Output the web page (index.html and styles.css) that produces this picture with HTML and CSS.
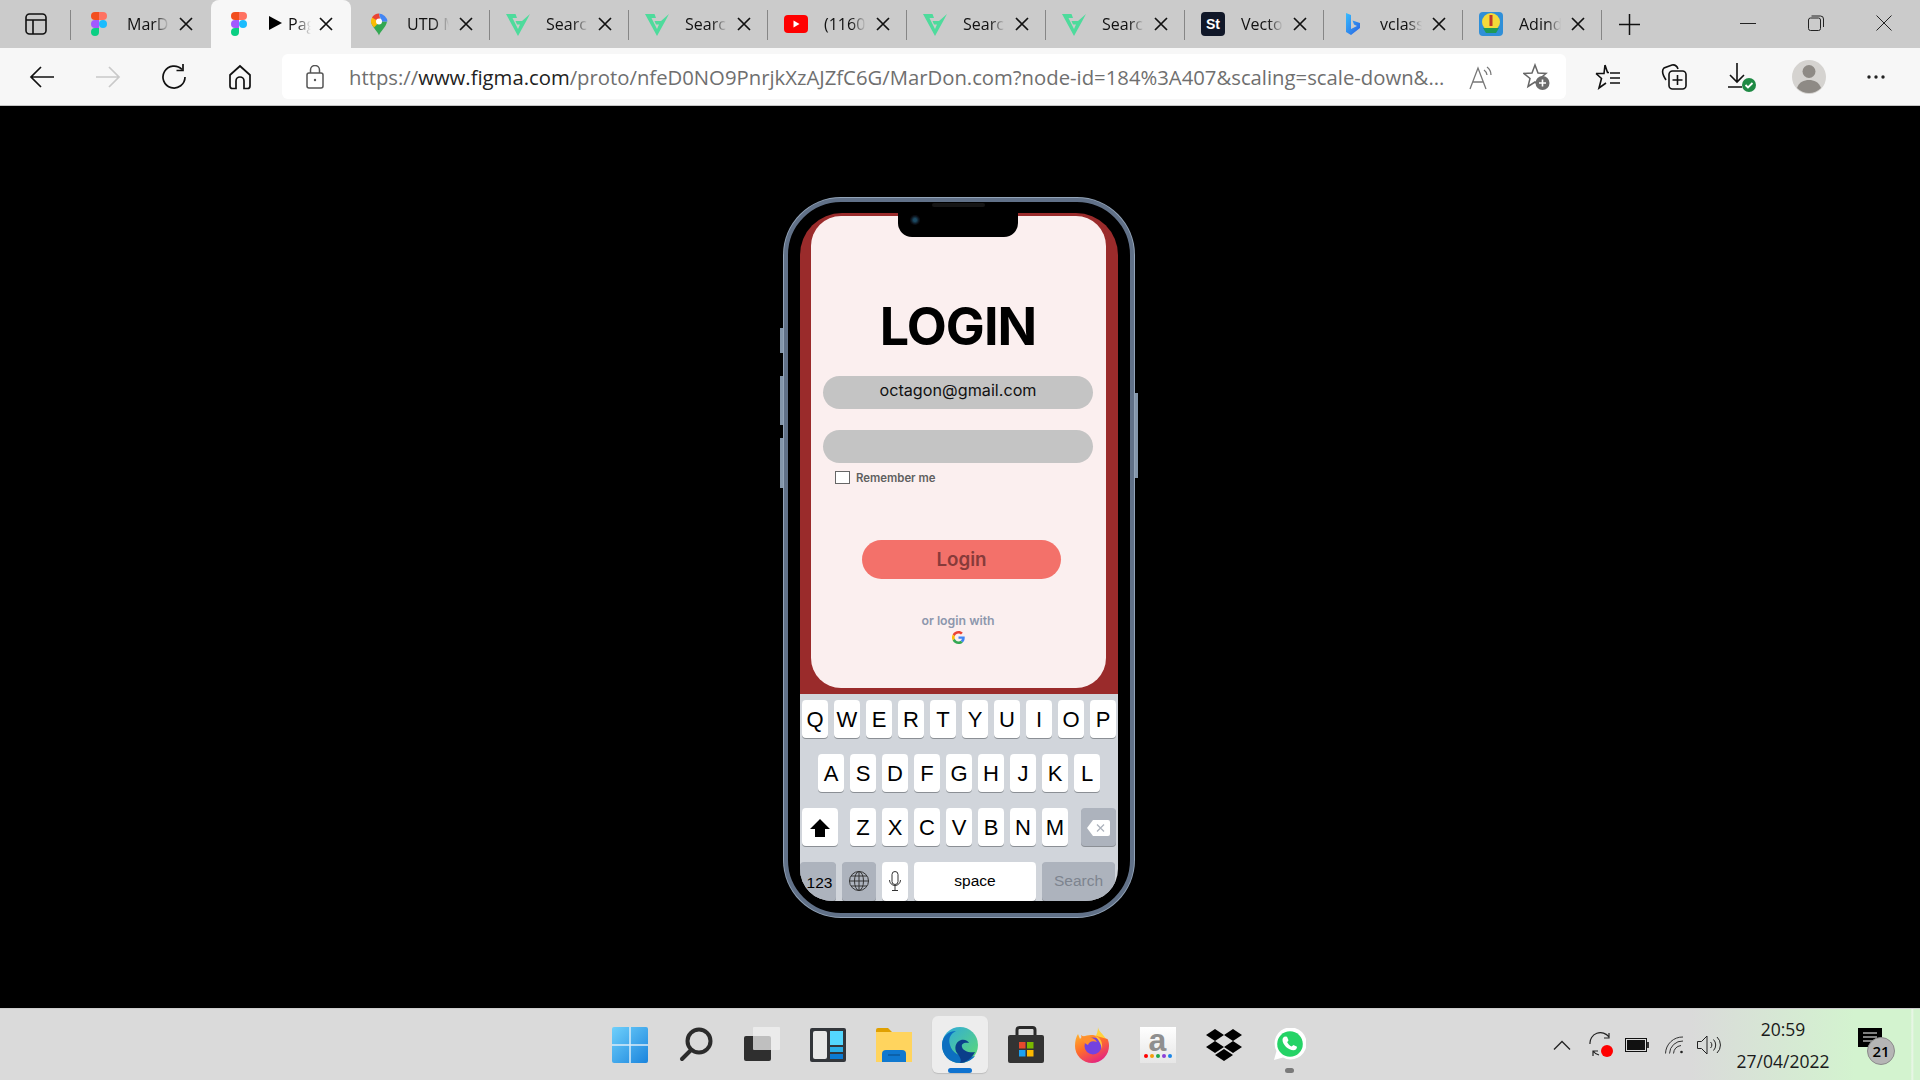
FILE: index.html
```html
<!DOCTYPE html>
<html lang="en">
<head>
    <meta charset="UTF-8">
    <meta name="viewport" content="width=device-width, initial-scale=1.0">
    <title>MarDon.com login prototype</title>
    <link rel="stylesheet" href="styles.css">
</head>
<body>

    <svg class="defs" width="0" height="0">
        <defs>
            <symbol id="figma" viewBox="0 0 16 24">
                <path fill="#f24e1e" d="M4 0h4v8H4a4 4 0 0 1 0-8z"/>
                <path fill="#ff7262" d="M8 0h4a4 4 0 0 1 0 8H8z"/>
                <path fill="#a259ff" d="M4 8h4v8H4a4 4 0 0 1 0-8z"/>
                <circle fill="#1abcfe" cx="12" cy="12" r="4"/>
                <path fill="#0acf83" d="M4 16h4v4a4 4 0 1 1-4-4z"/>
            </symbol>
            <symbol id="fenix" viewBox="0 0 24 24">
                <path fill="#4edb9c" d="M0 2h9.500l1.500 4H6.500l5.500 11 2-4.500h-3l-1.500-3.500h6.500L24 2l-4 7.500L12 24z"/>
            </symbol>
            <symbol id="close" viewBox="0 0 14 14">
                <path d="M1 1l12 12M13 1L1 13" stroke="#111" stroke-width="1.700" fill="none"/>
            </symbol>
        </defs>
    </svg>

    <div class="tabstrip">
        <div class="sidebar-btn">
            <svg width="22" height="22" viewBox="0 0 22 22" fill="none" stroke="#111" stroke-width="1.600"><rect x="1" y="1" width="20" height="20" rx="3.500"/><path d="M1 7h20M8 7v14"/></svg>
        </div>
        <div class="tab tab-first"><svg class="fav fav-figma"><use href="#figma"/></svg><span class="tab-title">MarDon</span><svg class="tab-close"><use href="#close"/></svg></div>
        <div class="tab tab-first tab-active"><svg class="fav fav-figma"><use href="#figma"/></svg><span class="tab-title"><span class="play"></span>Page</span><svg class="tab-close"><use href="#close"/></svg></div>
        <div class="tab tab-sep">
            <svg class="fav" viewBox="0 1 24 23"><path fill="#34a853" d="M12 24c-1-4-7-8-8-14h16c-1 6-7 10-8 14z"/><path fill="#fbbc04" d="M4 10c0-1 0-3 2-5l6 6-5 5c-2-2-3-4-3-6z"/><path fill="#ea4335" d="M5 6a9 9 0 0 1 7-4l1 5-3 2z"/><path fill="#4285f4" d="M12 2a9 9 0 0 1 8.500 8h-6z"/><circle cx="12" cy="10" r="3" fill="#fff"/></svg>
            <span class="tab-title">UTD Map</span><svg class="tab-close"><use href="#close"/></svg>
        </div>
        <div class="tab tab-sep"><svg class="fav"><use href="#fenix"/></svg><span class="tab-title">Search</span><svg class="tab-close"><use href="#close"/></svg></div>
        <div class="tab tab-sep"><svg class="fav"><use href="#fenix"/></svg><span class="tab-title">Search</span><svg class="tab-close"><use href="#close"/></svg></div>
        <div class="tab tab-sep">
            <svg class="fav" viewBox="0 0 24 24"><rect y="3" width="24" height="18" rx="4" fill="#f00"/><path fill="#fff" d="M9.500 8.500v7l6-3.500z"/></svg>
            <span class="tab-title">(1160)</span><svg class="tab-close"><use href="#close"/></svg>
        </div>
        <div class="tab tab-sep"><svg class="fav"><use href="#fenix"/></svg><span class="tab-title">Search</span><svg class="tab-close"><use href="#close"/></svg></div>
        <div class="tab tab-sep"><svg class="fav"><use href="#fenix"/></svg><span class="tab-title">Search</span><svg class="tab-close"><use href="#close"/></svg></div>
        <div class="tab tab-sep">
            <span class="fav fav-stock">St</span>
            <span class="tab-title">Vector</span><svg class="tab-close"><use href="#close"/></svg>
        </div>
        <div class="tab tab-sep">
            <svg class="fav" viewBox="0 0 24 24"><defs><linearGradient id="bing" x1="0" y1="0" x2="1" y2="1"><stop offset="0" stop-color="#37bdff"/><stop offset="1" stop-color="#2a5fe0"/></linearGradient></defs><path fill="url(#bing)" d="M6 1l5 2v14l6-3-3-1.500-1.500-4L20 11v5l-9 7-5-3z"/></svg>
            <span class="tab-title">vclass</span><svg class="tab-close"><use href="#close"/></svg>
        </div>
        <div class="tab tab-sep">
            <svg class="fav" viewBox="0 0 24 24"><rect width="24" height="24" rx="4" fill="#2f8fd8"/><circle cx="12" cy="10" r="9" fill="#f3d93a"/><rect x="10.500" y="3" width="3" height="11" fill="#c0392b"/><path fill="#1f9a56" d="M4 16h16l-3 5H7z"/></svg>
            <span class="tab-title">Adinda</span><svg class="tab-close"><use href="#close"/></svg>
        </div>
        <div class="new-tab">
            <svg width="21" height="21" viewBox="0 0 21 21" stroke="#111" stroke-width="1.500"><path d="M10.500 0v21M0 10.500h21"/></svg>
        </div>
        <div class="window-controls">
            <svg width="16" height="16" viewBox="0 0 16 16" stroke="#222" stroke-width="1"><path d="M0 8.500h16"/></svg>
            <svg width="16" height="16" viewBox="0 0 16 16" fill="none" stroke="#222" stroke-width="1"><rect x=".5" y="3" width="12" height="12.500" rx="2"/><path d="M3.500 1h9a3 3 0 0 1 3 3v8"/></svg>
            <svg width="16" height="16" viewBox="0 0 16 16" stroke="#222" stroke-width="1"><path d="M.5.500l15 15M15.500.5l-15 15"/></svg>
        </div>
    </div>

    <div class="toolbar">
        <button class="nav-btn">
            <svg width="26" height="24" viewBox="0 0 26 24" fill="none" stroke="#111" stroke-width="1.700"><path d="M25 12H2M12 2L2 12l10 10"/></svg>
        </button>
        <button class="nav-btn">
            <svg width="26" height="24" viewBox="0 0 26 24" fill="none" stroke="#c9c9c9" stroke-width="1.700"><path d="M1 12h23M14 2l10 10-10 10"/></svg>
        </button>
        <button class="nav-btn">
            <svg width="26" height="26" viewBox="0 0 26 26" fill="none" stroke="#111" stroke-width="1.700"><path d="M21 5.500A11 11 0 1 0 24 13"/><path d="M22 0v6.500h-6.500"/></svg>
        </button>
        <button class="nav-btn">
            <svg width="24" height="26" viewBox="0 0 24 26" fill="none" stroke="#111" stroke-width="1.700"><path d="M2 11L12 2l10 9v11a2.500 2.500 0 0 1-2.500 2.500H16V17a4 4 0 0 0-8 0v7.500H4.500A2.500 2.500 0 0 1 2 22z"/></svg>
        </button>
        <div class="addressbar">
            <svg class="lock" width="18" height="24" viewBox="0 0 18 24" fill="none" stroke="#555" stroke-width="1.500"><rect x="1" y="8" width="16" height="15" rx="2"/><path d="M4.500 8V5a4.500 4.500 0 0 1 9 0v3"/><circle cx="9" cy="15" r="1.200" fill="#555" stroke="none"/></svg>
            <span class="url">https://<b>www.figma.com</b>/proto/nfeD0NO9PnrjkXzAJZfC6G/MarDon.com?node-id=184%3A407&amp;scaling=scale-down&amp;...</span>
            <svg class="read-aloud" width="26" height="26" viewBox="0 0 26 26" fill="none" stroke="#777" stroke-width="1.300"><path d="M1 25L9 4l8 21M4 18h10"/><path d="M15 6a7 7 0 0 1 3 5M18 3a10 10 0 0 1 4 8"/></svg>
            <svg class="fav-add" width="28" height="28" viewBox="0 0 28 28"><path fill="none" stroke="#666" stroke-width="1.500" d="M12 2l3 8 8 .5-6 5 2 8-7-4.500-7 4.500 2-8-6-5 8-.5z"/><circle cx="19.500" cy="20" r="7" fill="#6c6c6c"/><path d="M19.500 16.500v7M16 20h7" stroke="#fff" stroke-width="1.600"/></svg>
        </div>
        <div class="toolbar-tools">
            <svg width="26" height="26" viewBox="0 0 26 26" fill="none" stroke="#111" stroke-width="1.600"><path d="M10 1l2.500 7.500H14M1 9.500h8L10 1M1 9.500l5.500 5L4 24l7-5"/><path d="M15 9h10M15 14h10M15 19h10"/></svg>
            <svg width="26" height="26" viewBox="0 0 26 26" fill="none" stroke="#111" stroke-width="1.600"><path d="M5 16C1 10 1 6 3 4l8-3c3-.5 5 1 6 4"/><rect x="8" y="7" width="17" height="18" rx="3.500"/><path d="M16.500 11v10M11.500 16h10"/></svg>
            <svg width="30" height="30" viewBox="0 0 30 30"><path fill="none" stroke="#111" stroke-width="1.600" d="M10 1v18M3 13l7 7 7-7M1 25h14"/><circle cx="22" cy="23" r="7" fill="#1e8a44"/><path fill="none" stroke="#fff" stroke-width="1.800" d="M18.500 23l2.500 2.500 4.500-4.500"/></svg>
            <svg class="profile" width="34" height="34" viewBox="0 0 34 34"><circle cx="17" cy="17" r="17" fill="#d5d3d0"/><circle cx="17" cy="11.500" r="6.500" fill="#8e8a85"/><path fill="#8e8a85" d="M5 28c2-6 7-8 12-8s10 2 12 8a17 17 0 0 1-24 0z"/></svg>
            <svg width="20" height="6" viewBox="0 0 20 6" fill="#222"><circle cx="3" cy="3" r="1.700"/><circle cx="10" cy="3" r="1.700"/><circle cx="17" cy="3" r="1.700"/></svg>
        </div>
    </div>

    <main class="stage">
        <div class="phone">
            <span class="side-btn side-mute"></span>
            <span class="side-btn side-up"></span>
            <span class="side-btn side-down"></span>
            <span class="side-btn side-power"></span>
            <span class="speaker"></span>
            <div class="screen">
                <div class="notch"><span class="camera"></span></div>
                <div class="app">
                    <div class="card">
                        <h1>LOGIN</h1>
                        <div class="field">octagon@gmail.com</div>
                        <div class="field field-second"></div>
                        <label class="remember"><span class="checkbox"></span>Remember me</label>
                        <button class="login-btn">Login</button>
                        <p class="or-login">or login with</p>
                        <svg class="google" width="13" height="13" viewBox="0 0 48 48">
                            <path fill="#ea4335" d="M24 9.500c3.500 0 6.700 1.300 9.100 3.500l6.800-6.800C35.800 2.400 30.200 0 24 0 14.600 0 6.500 5.400 2.600 13.200l7.900 6.200C12.400 13.700 17.700 9.500 24 9.500z"/>
                            <path fill="#4285f4" d="M47 24.500c0-1.600-.1-3.100-.4-4.500H24v9h12.900c-.6 3-2.200 5.500-4.700 7.200l7.700 6C44.400 37.600 47 31.600 47 24.500z"/>
                            <path fill="#fbbc05" d="M10.500 28.600a14.500 14.500 0 0 1 0-9.200l-7.900-6.200a24 24 0 0 0 0 21.600z"/>
                            <path fill="#34a853" d="M24 48c6.500 0 11.900-2.100 15.900-5.800l-7.700-6c-2.200 1.500-4.900 2.300-8.200 2.300-6.300 0-11.600-4.200-13.500-9.900l-7.900 6.200C6.500 42.600 14.600 48 24 48z"/>
                        </svg>
                    </div>
                </div>
                <div class="keyboard">
                    <div class="kb-row kb-row-top">
                        <span class="key">Q</span><span class="key">W</span><span class="key">E</span><span class="key">R</span><span class="key">T</span><span class="key">Y</span><span class="key">U</span><span class="key">I</span><span class="key">O</span><span class="key">P</span>
                    </div>
                    <div class="kb-row kb-row-mid">
                        <span class="key">A</span><span class="key">S</span><span class="key">D</span><span class="key">F</span><span class="key">G</span><span class="key">H</span><span class="key">J</span><span class="key">K</span><span class="key">L</span>
                    </div>
                    <div class="kb-row kb-row-shift">
                        <span class="key key-shift"><svg width="20" height="18" viewBox="0 0 20 18"><path fill="#000" d="M10 0l10 10h-5v8H5v-8H0z"/></svg></span>
                        <span class="key">Z</span><span class="key">X</span><span class="key">C</span><span class="key">V</span><span class="key">B</span><span class="key">N</span><span class="key">M</span>
                        <span class="key key-delete"><svg width="23" height="16" viewBox="0 0 23 16"><path fill="#fff" d="M6 0h15a2 2 0 0 1 2 2v12a2 2 0 0 1-2 2H6L0 8z"/><path d="M10 4.500l7 7M17 4.500l-7 7" stroke="#adb3bd" stroke-width="1.300"/></svg></span>
                    </div>
                    <div class="kb-row kb-row-bottom">
                        <span class="key key-num">123</span>
                        <span class="key key-globe"><svg width="20" height="20" viewBox="0 0 20 20" fill="none" stroke="#333" stroke-width="1"><circle cx="10" cy="10" r="9.500"/><ellipse cx="10" cy="10" rx="4.500" ry="9.500"/><path d="M10 .5v19M.5 10h19M2 5h16M2 15h16"/></svg></span>
                        <span class="key key-mic"><svg width="12" height="20" viewBox="0 0 12 20" fill="none" stroke="#333" stroke-width="1"><rect x="3" y=".5" width="6" height="13" rx="3"/><path d="M.5 9a5.500 5.500 0 0 0 11 0M6 14.500V19M3 19.500h6"/></svg></span>
                        <span class="key key-space">space</span>
                        <span class="key key-search">Search</span>
                    </div>
                </div>
            </div>
        </div>
    </main>

    <footer class="taskbar">
        <div class="taskbar-apps">
            <div class="app-slot">
                <svg width="36" height="36" viewBox="0 0 36 36"><defs><linearGradient id="win" x1="0" y1="0" x2="1" y2="1"><stop offset="0" stop-color="#6fd0fb"/><stop offset="1" stop-color="#1a84dd"/></linearGradient></defs><rect width="36" height="36" rx="2" fill="url(#win)"/><path d="M18 0v36M0 18h36" stroke="#dcecf7" stroke-width="1.500"/></svg>
            </div>
            <div class="app-slot">
                <svg width="34" height="36" viewBox="0 0 34 36" fill="none" stroke="#2b2b2b" stroke-width="4"><circle cx="20" cy="14" r="11.500"/><path d="M12 23L3 32" stroke-linecap="round"/></svg>
            </div>
            <div class="app-slot">
                <svg width="36" height="36" viewBox="0 0 36 36"><rect y="9" width="27" height="25" rx="2" fill="#2f2f2f"/><rect x="9" width="27" height="23" rx="1" fill="#f0f0f0" fill-opacity=".75"/></svg>
            </div>
            <div class="app-slot">
                <svg width="36" height="34" viewBox="0 0 36 34"><rect width="36" height="34" rx="2" fill="#33363b"/><rect x="3" y="3" width="14" height="28" rx="2" fill="#e8e8e8"/><rect x="20" y="3" width="13" height="14" fill="#54d7ff"/><rect x="20" y="19" width="13" height="5" fill="#2aaee8"/><rect x="20" y="26" width="13" height="5" fill="#0b7ad4"/></svg>
            </div>
            <div class="app-slot">
                <svg width="36" height="34" viewBox="0 0 36 34"><path fill="#e0a000" d="M0 2a2 2 0 0 1 2-2h10l4 4h20v6H0z"/><rect y="4" width="36" height="30" fill="#ffd45e"/><path fill="#0f78cf" d="M6 34v-8a4 4 0 0 1 4-4h16a4 4 0 0 1 4 4v8z"/><path d="M12 27h12" stroke="#0b5a9e" stroke-width="1.500"/></svg>
            </div>
            <div class="app-slot app-slot-active">
                <svg width="36" height="36" viewBox="0 0 36 36"><defs><linearGradient id="edge" x1="0" y1="0" x2="1" y2="1"><stop offset="0" stop-color="#2fa8e0"/><stop offset="1" stop-color="#5fdc6f"/></linearGradient></defs><circle cx="18" cy="18" r="18" fill="url(#edge)"/><path fill="#0c6fc0" d="M18 36C7 36 0 28 0 18 0 10 6 4 14 4c-6 3-8 8-6 14 2 8 10 12 20 12 2 0 4-1 5-1-3 4-9 7-15 7z"/><path fill="#0a3f8a" d="M15 26c-3-4-2-11 4-13 4-1 7 1 8 3-5-1-8 1-7 4 1 4 7 6 13 5-3 6-9 11-15 11 2-3 0-6-3-10z"/></svg>
                <span class="running-bar"></span>
            </div>
            <div class="app-slot">
                <svg width="36" height="37" viewBox="0 0 36 37"><path fill="none" stroke="#2a2a2a" stroke-width="3" d="M9 12V4a2.500 2.500 0 0 1 2.500-2.500h13A2.500 2.500 0 0 1 27 4v8"/><rect y="9" width="36" height="28" rx="2" fill="#333"/><rect x="11" y="16" width="6.500" height="6.500" fill="#e5482d"/><rect x="19" y="16" width="6.500" height="6.500" fill="#7ab800"/><rect x="11" y="24" width="6.500" height="6.500" fill="#1ba1f2"/><rect x="19" y="24" width="6.500" height="6.500" fill="#fdb900"/></svg>
            </div>
            <div class="app-slot">
                <svg width="34" height="36" viewBox="0 0 34 36"><defs><linearGradient id="fox" x1="0" y1="0" x2=".6" y2="1"><stop offset="0" stop-color="#ffb52c"/><stop offset=".5" stop-color="#ff6d2a"/><stop offset="1" stop-color="#e4267e"/></linearGradient></defs><path fill="#ffd23c" d="M23 0c0 5 9 9 10.500 18L20 10C22 7 23 4 23 0z"/><path fill="url(#fox)" d="M3 7c-2 3-3 7-3 12a17 17 0 0 0 34 0c0-3-.5-5-1.500-7L18 8C12 8 7 9 5 12z"/><circle cx="18" cy="19" r="8.500" fill="#7342e0"/><path fill="#ff8f2e" d="M6 8c3 3 12 0 16 7-5-2-8 0-9 3-2-1-6-3-7-10z"/><path fill="#ffc23c" d="M20 9c5 1 8 6 7 13-1-5-3-9-7-13z"/></svg>
            </div>
            <div class="app-slot">
                <div class="amazon-tile"><span class="amazon-a">a</span><span class="amazon-dots"><i></i><i></i><i></i><i></i><i></i></span></div>
            </div>
            <div class="app-slot">
                <svg width="36" height="32" viewBox="0 0 36 32" fill="#000"><path d="M9 0l9 6-9 6-9-6zM27 0l9 6-9 6-9-6zM9 12l9 6-9 6-9-6zM27 12l9 6-9 6-9-6zM18 20l9 6-9 6-9-6z"/></svg>
            </div>
            <div class="app-slot">
                <svg width="32" height="33" viewBox="0 0 32 33"><path fill="#fff" d="M0 32l2.500-9A16 16 0 1 1 9 29.500z"/><circle cx="16" cy="16" r="12.800" fill="#25d366"/><path fill="#fff" d="M11 8.500l2 .2 1.500 3.600-1.300 2c1 2 2.400 3.300 4.300 4.200l2-1.400 3.500 1.700c0 1.800-1.200 3.400-3.500 3.500-5 0-11-5.500-11-10.500 0-1.600.9-2.800 2.500-3.300z"/></svg>
                <span class="pinned-dot"></span>
            </div>
        </div>
        <div class="tray">
            <svg class="tray-chevron" width="18" height="10" viewBox="0 0 18 10" fill="none" stroke="#222" stroke-width="1.300"><path d="M1 9.500l8-8 8 8"/></svg>
            <svg class="tray-sync" width="24" height="26" viewBox="0 0 24 26"><path fill="none" stroke="#222" stroke-width="1.200" d="M1 12A10.500 10.500 0 0 1 20 5M20 1v5h-5M4 24v-5h5M4 19a10 10 0 0 0 6 4"/><circle cx="18" cy="19" r="6" fill="#f00"/></svg>
            <svg class="tray-battery" width="24" height="14" viewBox="0 0 24 14"><rect x=".5" y=".5" width="21" height="13" fill="none" stroke="#111"/><rect x="2" y="2" width="18" height="10" fill="#111"/><rect x="22" y="4" width="2" height="6" fill="#333"/></svg>
            <svg class="tray-wifi" width="20" height="18" viewBox="0 0 20 18" fill="none" stroke="#333" stroke-width="1"><path d="M.5 17.500A17 17 0 0 1 18 1M4.500 17.500A13 13 0 0 1 18 5M8.500 17.500A9 9 0 0 1 16 9.500"/><circle cx="16.500" cy="16" r="1.300" fill="#222" stroke="none"/></svg>
            <svg class="tray-volume" width="24" height="20" viewBox="0 0 24 20" fill="none" stroke="#222" stroke-width="1"><path d="M.5 6.500h4L10 1v18l-5.500-5.500h-4zM13.500 7a4 4 0 0 1 0 6M16.500 4.500a8 8 0 0 1 0 11M20 2a11 11 0 0 1 0 16"/></svg>
            <div class="clock"><span>20:59</span><span>27/04/2022</span></div>
            <div class="notify">
                <svg width="24" height="20" viewBox="0 0 24 20"><path fill="#000" d="M0 0h24v19H9l-3 0v0H0z"/><path d="M5 5h14M5 9h14M5 13h10" stroke="#fff" stroke-width="1"/></svg>
                <span class="notify-count">21</span>
            </div>
        </div>
    </footer>

</body>
</html>
```

FILE: styles.css
```css
* {
    box-sizing: border-box;
}

html, body {
    height: 100%;
}

body {
    font-family: 'Open Sans', sans-serif;
    margin: 0;
    background: #000;
    display: flex;
    flex-direction: column;
    overflow: hidden;
}

.defs {
    position: absolute;
}

/* Browser tabs */
.tabstrip {
    height: 48px;
    background: #cbcbcb;
    display: flex;
    align-items: stretch;
    flex: none;
}

.sidebar-btn {
    width: 71px;
    display: flex;
    align-items: center;
    justify-content: center;
    border-right: none;
    position: relative;
}

.sidebar-btn::after,
.tab-sep::after {
    content: '';
    position: absolute;
    right: 0;
    top: 10px;
    bottom: 8px;
    width: 1px;
    background: #868686;
}

.tab {
    flex: 0 0 139px;
    display: flex;
    align-items: center;
    position: relative;
    padding-left: 16px;
}

.tab-first {
    flex-basis: 140px;
}

.tab-active {
    background: #f7f7f7;
    border-radius: 8px 8px 0 0;
}

.fav {
    width: 24px;
    height: 24px;
    flex: none;
}

.fav-figma {
    width: 24px;
}

.fav-stock {
    background: #101728;
    color: #fff;
    border-radius: 4px;
    font: 700 14px 'Liberation Sans', sans-serif;
    display: flex;
    align-items: center;
    justify-content: center;
}

.tab-title {
    width: 42px;
    margin-left: 16px;
    font-size: 16px;
    color: #111;
    white-space: nowrap;
    overflow: hidden;
    -webkit-mask-image: linear-gradient(90deg, #000 65%, transparent);
    mask-image: linear-gradient(90deg, #000 65%, transparent);
}

.tab-active .tab-title {
    margin-left: 18px;
}

.play {
    display: inline-block;
    border-left: 13px solid #000;
    border-top: 7px solid transparent;
    border-bottom: 7px solid transparent;
    margin-right: 6px;
}

.tab-active .tab-close {
    margin-left: 8px;
}

.tab-close {
    width: 14px;
    height: 14px;
    margin-left: 10px;
    flex: none;
}

.new-tab {
    width: 54px;
    display: flex;
    align-items: center;
    justify-content: center;
}

.window-controls {
    margin-left: auto;
    display: flex;
    align-items: center;
    gap: 52px;
    padding-right: 28px;
    padding-bottom: 2px;
}

/* Toolbar */
.toolbar {
    height: 58px;
    background: #f7f7f7;
    border-bottom: 1px solid #c4c4c4;
    display: flex;
    align-items: center;
    padding: 0 0 0 9px;
    flex: none;
}

.nav-btn {
    width: 66px;
    height: 40px;
    padding: 0;
    border: none;
    background: none;
    display: flex;
    align-items: center;
    justify-content: center;
}

.addressbar {
    width: 1284px;
    height: 45px;
    margin-left: 9px;
    background: #fff;
    border-radius: 6px;
    display: flex;
    align-items: center;
    padding-left: 24px;
}

.url {
    margin-left: 25px;
    font-size: 20.300px;
    color: #6f6f6f;
    white-space: nowrap;
}

.url b {
    font-weight: 400;
    color: #222;
}

.read-aloud {
    margin-left: auto;
}

.fav-add {
    margin-left: 28px;
    margin-right: 15px;
}

.toolbar-tools {
    margin-left: 29px;
    display: flex;
    align-items: center;
    gap: 40px;
}

.profile {
    margin-left: -5px;
}

/* Figma prototype area */
.stage {
    flex: 1;
    background: #000;
    display: flex;
    justify-content: center;
    align-items: flex-start;
    padding: 92px 2px 0 0;
}

.phone {
    width: 350px;
    height: 719px;
    border: 4px solid #617188;
    border-radius: 57px;
    background: #000;
    padding: 11px 12px 12px 12px;
    position: relative;
    box-shadow: 0 0 0 1px #93a4b8;
}

.side-btn {
    position: absolute;
    width: 3px;
    background: #8496ab;
}

.side-mute {
    left: -8px;
    top: 126px;
    height: 25px;
}

.side-up {
    left: -8px;
    top: 174px;
    height: 49px;
}

.side-down {
    left: -8px;
    top: 236px;
    height: 50px;
}

.side-power {
    right: -8px;
    top: 191px;
    height: 85px;
}

.speaker {
    position: absolute;
    left: 144px;
    top: 1px;
    width: 53px;
    height: 4px;
    border-radius: 2px;
    background: #151515;
}

.screen {
    height: 100%;
    display: flex;
    flex-direction: column;
    border-radius: 42px 42px 32px 32px;
    overflow: hidden;
    position: relative;
}

.notch {
    position: absolute;
    left: 98px;
    top: 0;
    width: 120px;
    height: 24px;
    background: #000;
    border-radius: 0 0 14px 14px;
}

.camera {
    position: absolute;
    left: 12px;
    top: 2px;
    width: 10px;
    height: 10px;
    border-radius: 50%;
    background: radial-gradient(#1c4a63 20%, #0a0d14 60%);
}

.app {
    height: 481px;
    flex: none;
    background: #9a2b2b;
    padding: 3px 12px 6px 11px;
}

.card {
    height: 100%;
    background: #fbefef;
    border-radius: 30px;
    padding: 81px 13px 0 12px;
    text-align: center;
}

h1 {
    margin: 0;
    font: 700 52px/60px Inter, sans-serif;
    color: #000;
    letter-spacing: -1px;
}

.field {
    height: 33px;
    margin-top: 19px;
    border-radius: 17px;
    background: #c4c4c4;
    font: 400 16.200px/29px Inter, sans-serif;
    color: #111;
}

.field-second {
    margin-top: 21px;
}

.remember {
    display: flex;
    align-items: center;
    height: 13px;
    margin-top: 8px;
    padding-left: 12px;
    font: 600 11.400px Inter, sans-serif;
    color: #5f5f5f;
}

.checkbox {
    width: 15px;
    height: 13px;
    border: 1px solid #666;
    background: #fff;
    margin-right: 6px;
}

.login-btn {
    display: block;
    width: 199px;
    height: 39px;
    margin: 56px 0 0 39px;
    padding: 0;
    border: none;
    border-radius: 20px;
    background: #f3716a;
    font: 600 18.800px Inter, sans-serif;
    color: #873b3a;
}

.or-login {
    margin: 35px 0 0;
    font: 600 12.300px/14px Inter, sans-serif;
    color: #8d97ad;
}

.google {
    display: block;
    margin: 3px auto 0;
}

/* iOS keyboard */
.keyboard {
    flex: 1;
    background: #d1d5db;
    padding-top: 6px;
    display: flex;
    flex-direction: column;
    gap: 16px;
    font-family: 'Liberation Sans', sans-serif;
}

.kb-row {
    display: flex;
    gap: 6px;
    height: 38px;
    flex: none;
}

.kb-row-top,
.kb-row-shift {
    padding-left: 2px;
}

.kb-row-mid {
    padding-left: 18px;
}

.key {
    width: 26px;
    padding-top: 1px;
    background: #fff;
    border-radius: 4px;
    box-shadow: 0 1px 0 #8b8f95;
    display: flex;
    align-items: center;
    justify-content: center;
    font-size: 22px;
    color: #000;
}

.key-shift {
    width: 36px;
    margin-right: 6px;
}

.key-delete {
    width: 35px;
    margin-left: 7px;
    background: #adb3bd;
}

.kb-row-bottom .key {
    height: 39px;
    padding: 0 0 2px;
    font-size: 15.500px;
}

.kb-row-bottom .key-num {
    width: 36px;
    background: #adb3bd;
    padding: 2px 0 0 3px;
}

.key-globe {
    width: 34px;
    background: #adb3bd;
}

.key-space {
    width: 122px;
}

.key-search {
    width: 73px;
    background: #adb3bd;
    color: #7d848f;
}

/* Windows taskbar */
.taskbar {
    height: 72px;
    flex: none;
    border-top: 1px solid #cdcdcd;
    background: linear-gradient(90deg, #dadada 1690px, #d3f3cf 1855px, #d3f3cf 1911px, #eef6ec 1912px, #d3f3cf 1914px);
    display: grid;
    grid-template-columns: 1fr auto 1fr;
    align-items: center;
}

.taskbar-apps {
    grid-column: 2;
    display: flex;
    padding-right: 1px;
}

.app-slot {
    width: 66px;
    height: 57px;
    display: flex;
    align-items: center;
    justify-content: center;
    position: relative;
}

.app-slot-active {
    background: #ededed;
    border-radius: 6px;
    width: 56px;
    margin: 0 5px;
    box-shadow: 0 1px 1px #bdbdbd;
}

.running-bar {
    position: absolute;
    left: 16px;
    bottom: 0;
    width: 24px;
    height: 5px;
    border-radius: 3px;
    background: #0f73d0;
}

.pinned-dot {
    position: absolute;
    left: 28px;
    bottom: 0;
    width: 9px;
    height: 5px;
    border-radius: 3px;
    background: #7a7a7a;
}

.amazon-tile {
    width: 36px;
    height: 36px;
    background: linear-gradient(#fff, #e6e6e6);
    display: flex;
    flex-direction: column;
    align-items: center;
    font-family: 'Liberation Sans', sans-serif;
}

.amazon-a {
    font-size: 32px;
    font-weight: 700;
    line-height: 26px;
    color: #8f8f8f;
}

.amazon-dots {
    display: flex;
    gap: 2px;
    margin-top: 1px;
}

.amazon-dots i {
    width: 4px;
    height: 4px;
    border-radius: 50%;
    background: #ff0000;
}

.amazon-dots i:nth-child(2) {
    background: #f59e0b;
}

.amazon-dots i:nth-child(3) {
    background: #22a94f;
}

.amazon-dots i:nth-child(4) {
    background: #8b3fd9;
}

.amazon-dots i:nth-child(5) {
    background: #1a86e8;
}

.tray {
    grid-column: 3;
    display: flex;
    align-items: center;
    justify-content: flex-end;
    padding-right: 38px;
    position: relative;
}

.tray svg {
    flex: none;
}

.tray-chevron {
    margin-right: 18px;
}

.tray-sync {
    margin-right: 12px;
}

.tray-battery {
    margin-right: 16px;
}

.tray-wifi {
    margin-right: 12px;
}

.clock {
    width: 122px;
    margin-left: 1px;
    margin-right: 14px;
    display: flex;
    flex-direction: column;
    align-items: center;
    gap: 10px;
    font-size: 17.500px;
    line-height: 22px;
    color: #1a1a1a;
}

.notify {
    width: 24px;
    height: 20px;
    margin-bottom: 14px;
    position: relative;
}

.notify-count {
    position: absolute;
    left: 9px;
    top: 9px;
    width: 28px;
    height: 28px;
    border-radius: 50%;
    border: 1px solid #8a8a8a;
    background: #b5b5b5;
    display: flex;
    align-items: center;
    justify-content: center;
    font-size: 15px;
    font-weight: 600;
    color: #000;
}
```
